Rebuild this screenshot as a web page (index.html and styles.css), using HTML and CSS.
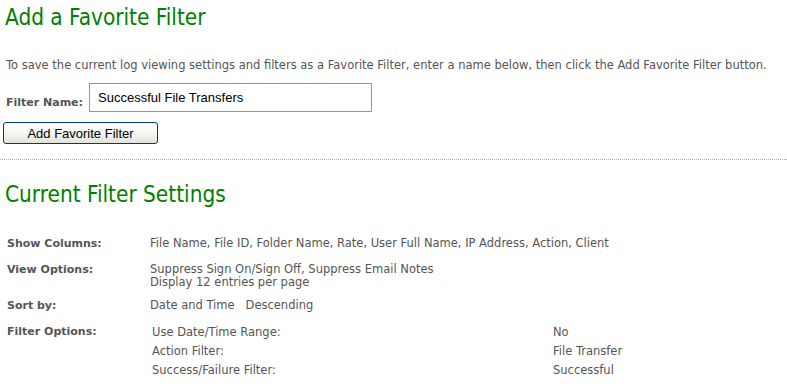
FILE: index.html
```html
<!DOCTYPE html>
<html>
<head>
	<title>Add a Favorite Filter</title>
	<link rel="stylesheet" href="styles.css">
</head>
<body>

	<h1 class="title">Add a Favorite Filter</h1>
	<p class="intro">To save the current log viewing settings and filters as a Favorite Filter, enter a name below, then click the Add Favorite Filter button.</p>

	<div class="name-row">
		<label for="filterName" class="name-label">Filter Name:</label>
		<input type="text" id="filterName" class="name-input" value="Successful File Transfers">
	</div>
	<button class="add-btn">Add Favorite Filter</button>

	<div class="divider"></div>

	<h1 class="title second">Current Filter Settings</h1>

	<table class="settings">
		<tr>
			<td class="key">Show Columns:</td>
			<td>File Name, File ID, Folder Name, Rate, User Full Name, IP Address, Action, Client</td>
		</tr>
		<tr class="tight">
			<td class="key">View Options:</td>
			<td>Suppress Sign On/Sign Off, Suppress Email Notes<br>Display 12 entries per page</td>
		</tr>
		<tr>
			<td class="key">Sort by:</td>
			<td>Date and Time &nbsp; Descending</td>
		</tr>
		<tr>
			<td class="key">Filter Options:</td>
			<td class="nested-cell">
				<table class="options">
					<tr><td class="opt">Use Date/Time Range:</td><td>No</td></tr>
					<tr><td class="opt">Action Filter:</td><td>File Transfer</td></tr>
					<tr><td class="opt">Success/Failure Filter:</td><td>Successful</td></tr>
				</table>
			</td>
		</tr>
	</table>

</body>
</html>
```

FILE: styles.css
```css
body {
	margin: 0;
	padding: 0 5px;
	background: #fff;
	font-family: "DejaVu Sans", Verdana, sans-serif;
	font-size: 11.5px;
	color: #555;
}

.title {
	font-family: "DejaVu Sans Condensed", "DejaVu Sans", sans-serif;
	font-size: 22.4px;
	font-weight: normal;
	color: #008000;
	margin: 3px 0 0 0;
	line-height: 28px;
}
.title.second { margin-top: 20px; }

.intro {
	margin: 27px 0 0 1px;
	line-height: 14px;
}

.name-row {
	display: flex;
	align-items: flex-end;
	margin-top: 11px;
}
.name-label {
	font-size: 11px;
	font-weight: bold;
	width: 83px;
	padding-left: 1px;
	padding-bottom: 3px;
}
.name-input {
	width: 283px;
	height: 29px;
	box-sizing: border-box;
	border: 1px solid #7f9db9;
	padding: 0 8px;
	font-family: "Liberation Sans", Arial, sans-serif;
	font-size: 13px;
	color: #000;
}

.add-btn {
	display: block;
	margin: 10px 0 0 -2px;
	width: 155px;
	height: 22px;
	border: 1px solid #003c74;
	border-radius: 3px;
	background: linear-gradient(#fff, #f3f3ef 60%, #e2e2da);
	font-family: "Liberation Sans", Arial, sans-serif;
	font-size: 13px;
	color: #000;
	padding: 0;
}

.divider {
	border-top: 1px dotted #aaa;
	margin: 15px -5px 0;
}

.settings {
	border-collapse: collapse;
	margin-top: 23px;
	margin-left: 2px;
}
.settings td {
	vertical-align: top;
	padding: 6px 0 7px 0;
	line-height: 13px;
}
.settings .key {
	font-size: 11px;
	font-weight: bold;
	width: 143px;
}
.settings .tight td { padding-bottom: 4px; }
.settings .nested-cell { padding-top: 4px; padding-left: 2px; }

.options { border-collapse: collapse; }
.options td {
	padding: 3px 0;
	line-height: 13px;
}
.options .opt { width: 401px; }
```
